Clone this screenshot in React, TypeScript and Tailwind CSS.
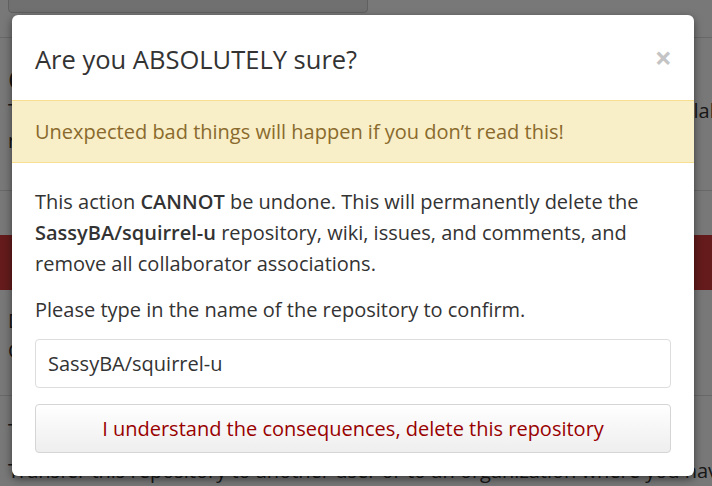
export default function App() {
  return (
    <div className="relative h-[486px] w-[712px] overflow-hidden bg-white font-['Segoe_UI','Open_Sans',sans-serif] text-[#333]">
      {/* page behind the dialog */}
      <div className="flex flex-col px-[8px]">
        <div className="-mt-[20px] h-[33px] w-[360px] rounded-b border border-[#ccc] bg-[#eee]" />
        <div className="-mx-[8px] mt-[24px] border-t border-[#ddd]" />
        <div className="pt-[24px] text-[28px] leading-[34px]">Change repository name</div>
        <div className="whitespace-nowrap text-[20px] leading-[30px]">
          The repository will be renamed, and links will be redirected to the new collaborator prayer
        </div>
        <div className="text-[20px] leading-[30px]">name</div>
        <div className="-mx-[8px] mt-[34px] border-t border-[#ddd]" />
        <div className="-mx-[8px] mt-[44px] flex h-[55px] items-center bg-[#d63a3a] px-[8px]">
          <div className="ml-[22px] h-[16px] w-[6px] bg-[#bbb]" />
        </div>
        <div className="pt-[16px] text-[20px] leading-[30px]">Delete this repository</div>
        <div className="text-[20px] leading-[30px]">Once you delete a repository, there is no going back.</div>
        <div className="-mx-[8px] mt-[29px] border-t border-[#ddd]" />
        <div className="pt-[20px] text-[20px] leading-[30px]">Transfer ownership</div>
        <div className="whitespace-nowrap pt-[10px] text-[20px] leading-[30px]">
          Transfer this repository to another user or to an organization where you have
        </div>
      </div>

      {/* backdrop */}
      <div className="absolute inset-0 bg-black/[0.53]" />

      {/* dialog */}
      <div className="absolute left-[12px] top-[15px] w-[682px] rounded-[6px] bg-white shadow-[0_3px_9px_rgba(0,0,0,0.5)]">
        <div className="flex h-[85px] items-center justify-between pl-[23px] pr-[22px]">
          <h4 className="pt-[4px] text-[25.5px] text-[#333]">Are you ABSOLUTELY sure?</h4>
          <span className="text-[30px] font-bold leading-none text-[#c4c4c4]">×</span>
        </div>
        <div className="flex h-[63px] items-center border-y border-[#f6e08f] bg-[#f8eec8] px-[23px] text-[20px] text-[#8a6a2c]">
          Unexpected bad things will happen if you don’t read this!
        </div>
        <div className="flex flex-col px-[23px] pb-[23px] pt-[23px] text-[20px] leading-[31px]">
          <p>
            This action <strong className="font-semibold">CANNOT</strong> be undone. This will permanently delete the{' '}
            <strong className="font-semibold">SassyBA/squirrel-u</strong> repository, wiki, issues, and comments, and
            remove all collaborator associations.
          </p>
          <p className="mt-[15px]">Please type in the name of the repository to confirm.</p>
          <div className="mt-[14px] flex h-[49px] items-center rounded border border-[#ddd] px-[12px]">
            SassyBA/squirrel-u
          </div>
          <button className="mt-[16px] h-[49px] rounded border border-[#d5d5d5] bg-gradient-to-b from-white to-[#eee] text-[20px] font-medium text-[#990000]">
            I understand the consequences, delete this repository
          </button>
        </div>
      </div>
    </div>
  );
}
